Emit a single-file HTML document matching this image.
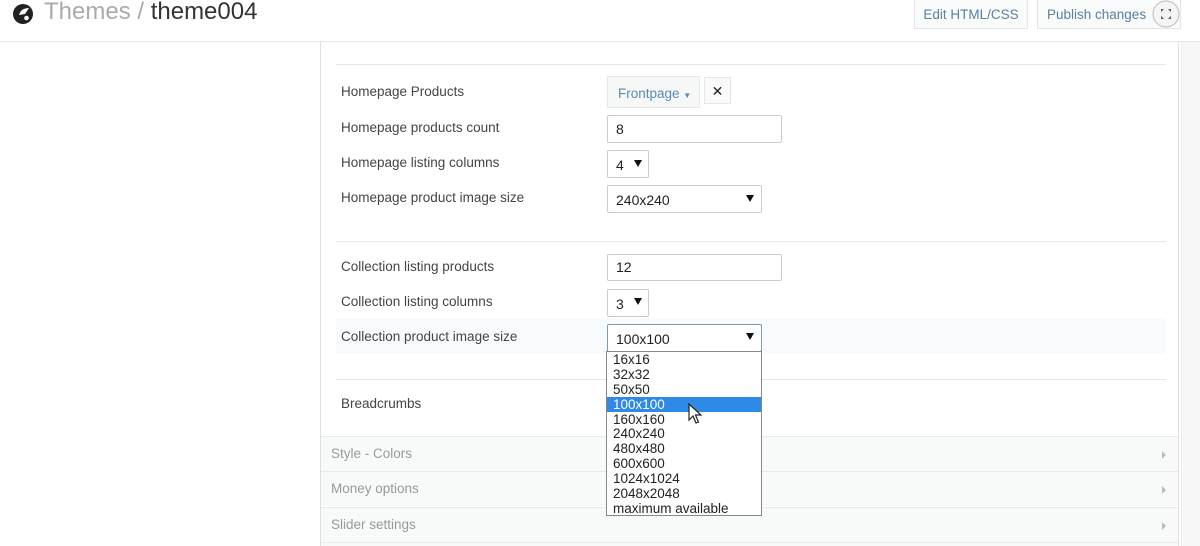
<!DOCTYPE html>
<html><head><meta charset="utf-8"><style>
*{box-sizing:border-box;margin:0;padding:0}
body{width:1200px;height:546px;overflow:hidden;background:#fff;font-family:"Liberation Sans",sans-serif;position:relative;color:#333}
.a{position:absolute}
.lbl{position:absolute;left:341px;font-size:13.5px;color:#444}
.inp{position:absolute;border:1px solid #ccc;background:#fff;font-size:14px;color:#222;padding-left:8px;border-radius:2px}
.tri{position:absolute;width:0;height:0;border-left:4px solid transparent;border-right:4px solid transparent;border-top:7px solid #111}
.sec{position:absolute;left:321px;width:857px;height:35px;background:#f8fafa;border-top:1px solid #e6eaea;font-size:13.5px;color:#999;padding:9px 0 0 10px}
.sec:after{content:"";position:absolute;right:12px;top:14px;border-top:4px solid transparent;border-bottom:4px solid transparent;border-left:4px solid #bbb}
.dd div{height:14.9px;line-height:16px;font-size:13.5px;color:#222;padding-left:6px}
</style></head><body>
<!-- header -->
<svg class="a" style="left:12px;top:3px" width="22" height="22" viewBox="0 0 22 22"><circle cx="11" cy="11" r="10" fill="#222"/><path d="M7 12 Q9 5 17 5 L13 11 Z" fill="#fff"/><circle cx="14.5" cy="15" r="2.3" fill="#fff"/></svg>
<div class="a" style="left:44px;top:-2px;font-size:24px;color:#aaa">Themes / <span style="color:#333">theme004</span></div>
<div class="a" style="left:914px;top:0;width:114px;height:29px;border:1px solid #e2e6e6;border-top:none;background:#f9fafa;color:#5a7fa0;font-size:13.5px;text-align:center;line-height:29px">Edit HTML/CSS</div>
<div class="a" style="left:1037px;top:0;width:144px;height:29px;border:1px solid #e2e6e6;border-top:none;background:#f9fafa;color:#5a7fa0;font-size:13.5px;line-height:29px;padding-left:9px">Publish changes</div>
<svg class="a" style="left:1151px;top:0" width="30" height="29" viewBox="0 0 30 29"><circle cx="15" cy="14" r="13" fill="#f4f4f4" stroke="#bbb"/><g fill="#555"><path d="M10 9 L13 9 L10 12Z"/><path d="M20 9 L17 9 L20 12Z"/><path d="M10 19 L13 19 L10 16Z"/><path d="M20 19 L17 19 L20 16Z"/></g></svg>
<div class="a" style="left:0;top:41px;width:1200px;height:1px;background:#e6e6e6"></div>
<div class="a" style="left:320px;top:42px;width:1px;height:504px;background:#e0e0e0"></div>
<div class="a" style="left:1178px;top:42px;width:1px;height:504px;background:#e0e0e0"></div>
<div class="a" style="left:1181px;top:42px;width:19px;height:504px;background:#f7f7f7;border-left:1px solid #eee"></div>
<!-- rows -->
<div class="a" style="left:336px;top:64px;width:830px;height:1px;background:#e8e8e8"></div>
<div class="lbl" style="top:84px">Homepage Products</div>
<div class="a" style="left:607px;top:76px;width:93px;height:32px;border:1px solid #e4e8e8;background:#f6f8f8;color:#5a8bb0;font-size:13.5px;padding:9px 0 0 10px">Frontpage <span style="font-size:8px">▼</span></div>
<div class="a" style="left:704px;top:77px;width:27px;height:27px;border:1px solid #e4e8e8;background:#fafafa;text-align:center;line-height:26px;font-size:14px;color:#222">✕</div>
<div class="lbl" style="top:120px">Homepage products count</div>
<div class="inp" style="left:607px;top:115px;width:175px;height:28px;line-height:26px">8</div>
<div class="lbl" style="top:155px">Homepage listing columns</div>
<div class="inp" style="left:607px;top:150px;width:42px;height:28px;line-height:28px">4</div><div class="tri" style="left:634px;top:160px"></div>
<div class="lbl" style="top:190px">Homepage product image size</div>
<div class="inp" style="left:607px;top:185px;width:155px;height:28px;line-height:28px">240x240</div><div class="tri" style="left:746px;top:195px"></div>
<div class="a" style="left:336px;top:241px;width:830px;height:1px;background:#e8e8e8"></div>
<div class="lbl" style="top:259px">Collection listing products</div>
<div class="inp" style="left:607px;top:254px;width:175px;height:27px;line-height:25px">12</div>
<div class="lbl" style="top:294px">Collection listing columns</div>
<div class="inp" style="left:607px;top:289px;width:42px;height:28px;line-height:28px">3</div><div class="tri" style="left:634px;top:298px"></div>
<div class="a" style="left:336px;top:318px;width:830px;height:36px;background:#f7fbfd"></div>
<div class="lbl" style="top:329px">Collection product image size</div>
<div class="inp" style="left:607px;top:324px;width:155px;height:28px;line-height:28px;border-color:#7a9bb0">100x100</div><div class="tri" style="left:746px;top:333px"></div>
<div class="a" style="left:336px;top:379px;width:830px;height:1px;background:#e8e8e8"></div>
<div class="lbl" style="top:396px">Breadcrumbs</div>
<div class="sec" style="top:436px">Style - Colors</div>
<div class="sec" style="top:471px">Money options</div>
<div class="sec" style="top:507px">Slider settings</div>
<div class="a" style="left:321px;top:542px;width:857px;height:4px;background:#f8fafa;border-top:1px solid #e6eaea"></div>
<!-- dropdown -->
<div class="a dd" style="left:606px;top:351px;width:156px;height:165px;background:#fff;border:1px solid #888">
<div>16x16</div><div>32x32</div><div>50x50</div><div style="background:#2e8ae6;color:#fff">100x100</div><div>160x160</div><div>240x240</div><div>480x480</div><div>600x600</div><div>1024x1024</div><div>2048x2048</div><div>maximum available</div>
</div>
<svg class="a" style="left:688px;top:403px" width="16" height="22" viewBox="0 0 16 22"><path d="M1 1 L1 17 L5 13 L8 20 L10.5 19 L7.5 12 L13 12 Z" fill="#fff" stroke="#222" stroke-width="1.2"/></svg>
</body></html>
